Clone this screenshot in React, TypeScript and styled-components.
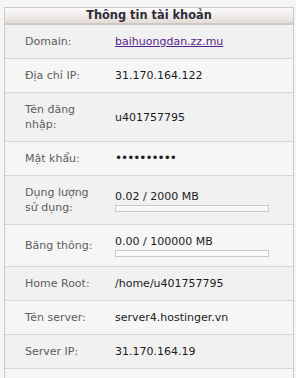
import React from 'react';
import styled, { createGlobalStyle } from 'styled-components';

const GlobalStyle = createGlobalStyle`
  html, body {
    margin: 0;
    padding: 0;
    background: #f5f5f5;
  }
  body {
    font-family: "DejaVu Sans", Verdana, sans-serif;
  }
`;

const Page = styled.div`
  padding: 7px 0 0 4px;
`;

const Panel = styled.div`
  width: 290px;
  box-sizing: border-box;
  border: 1px solid #cacaca;
  border-bottom: none;
`;

const Header = styled.div`
  height: 15px;
  line-height: 15px;
  text-align: center;
  font-weight: bold;
  font-size: 11.4px;
  color: #2e2e38;
  background: linear-gradient(to bottom, #fcfcfc 0%, #f1ecea 50%, #e6dbd6 100%);
  border-bottom: 2px solid #cbcbcb;
`;

const Row = styled.div<{ $alt?: boolean }>`
  display: grid;
  grid-template-columns: 110px 1fr;
  align-items: center;
  padding: 9px 0;
  background: ${({ $alt }) => ($alt ? '#f6f6f6' : '#f1f1f1')};
  border-bottom: 1px solid #d4d4d4;
  font-size: 11px;
  line-height: 15px;
`;

const Label = styled.div`
  padding-left: 20px;
  width: 74px;
  color: #5c5c5c;
`;

const Value = styled.div`
  color: #1c1c1c;
`;

const Link = styled.a`
  color: #5a1f8e;
  text-decoration: underline;
`;

const Dots = styled.span`
  letter-spacing: -1px;
  font-size: 12px;
`;

const Bar = styled.div`
  width: 152px;
  height: 5px;
  margin-top: 1px;
  border: 1px solid #c9c9c9;
  background: #f9f9f9;
`;

type Item = { label: string; value: React.ReactNode; bar?: boolean };

const items: Item[] = [
  { label: 'Domain:', value: <Link href="#">baihuongdan.zz.mu</Link> },
  { label: 'Địa chỉ IP:', value: '31.170.164.122' },
  { label: 'Tên đăng nhập:', value: 'u401757795' },
  { label: 'Mật khẩu:', value: <Dots>••••••••••</Dots> },
  { label: 'Dụng lượng sử dụng:', value: '0.02 / 2000 MB', bar: true },
  { label: 'Băng thông:', value: '0.00 / 100000 MB', bar: true },
  { label: 'Home Root:', value: '/home/u401757795' },
  { label: 'Tên server:', value: 'server4.hostinger.vn' },
  { label: 'Server IP:', value: '31.170.164.19' },
  { label: 'Email:', value: '' },
];

export default function App() {
  return (
    <Page>
      <GlobalStyle />
      <Panel>
        <Header>Thông tin tài khoản</Header>
        {items.map((it, i) => (
          <Row key={it.label} $alt={i % 2 === 1}>
            <Label>{it.label}</Label>
            <Value>
              {it.value}
              {it.bar && <Bar />}
            </Value>
          </Row>
        ))}
      </Panel>
    </Page>
  );
}
